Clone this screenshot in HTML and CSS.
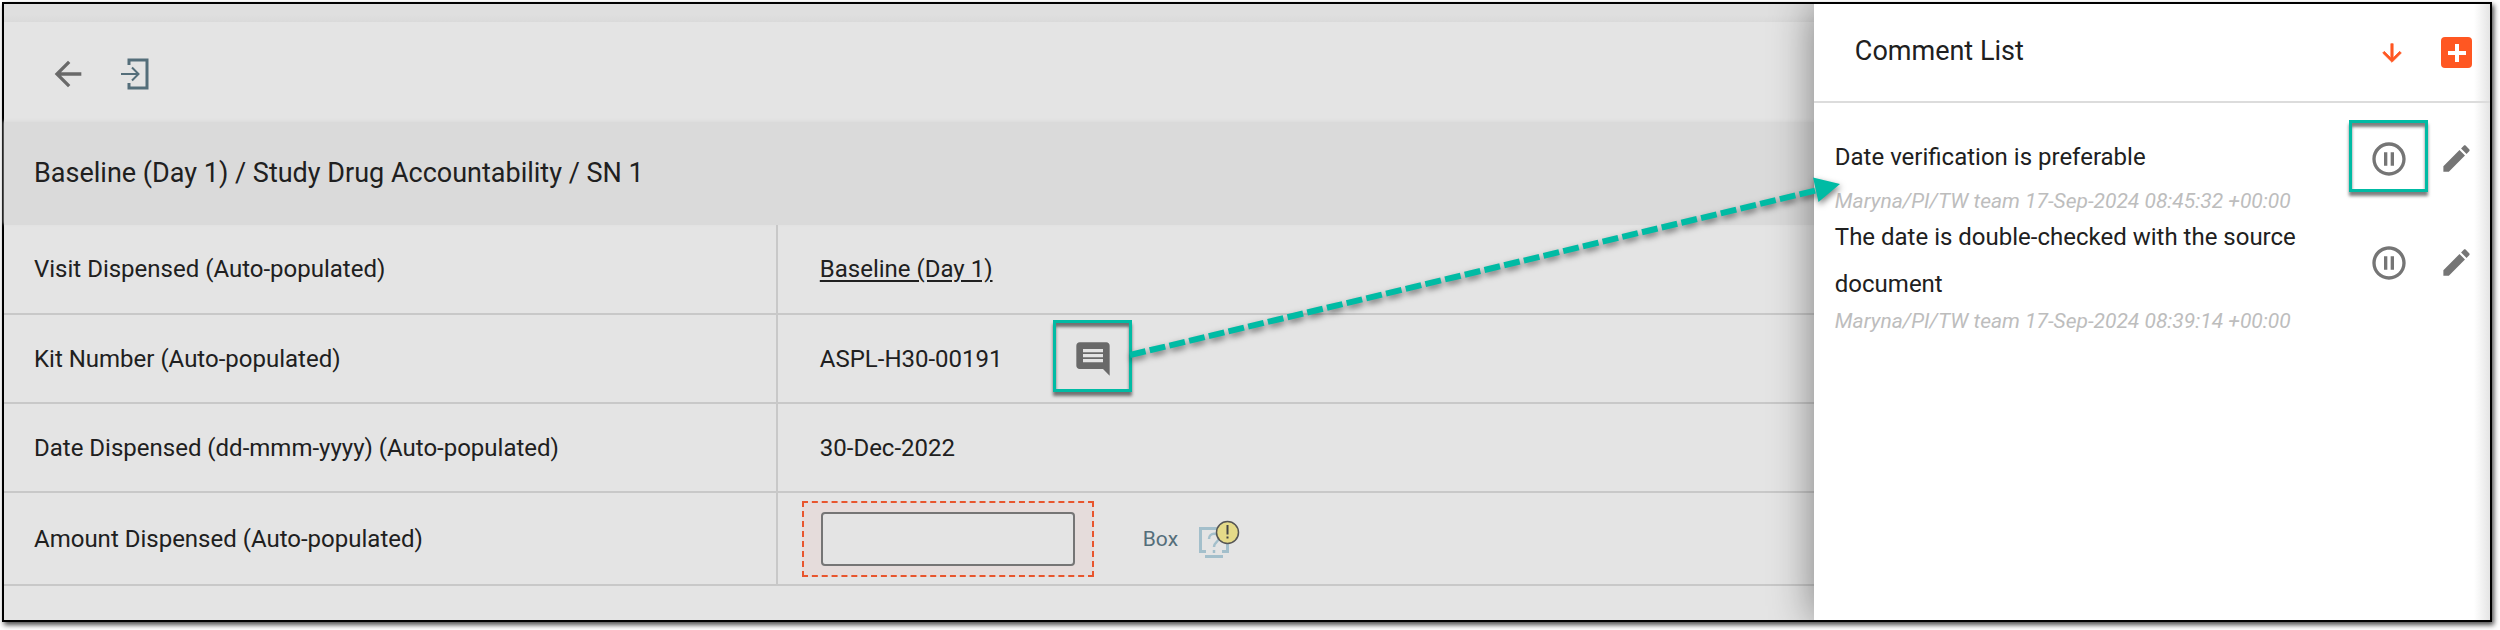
FILE: index.html
```
<!DOCTYPE html>
<html lang="en">
<head>
    <meta charset="UTF-8">
    <meta name="viewport" content="width=device-width, initial-scale=1.0">
    <title>Study Drug Accountability</title>
    <link rel="stylesheet" href="styles.css">
</head>
<body>
    <div class="window">
        <main class="form">
            <div class="strip"></div>
            <div class="toolbar">
                <button class="icon-button" aria-label="Back">
                    <svg width="40" height="40" viewBox="0 0 24 24" fill="currentColor">
                        <path d="M20 11H7.83l5.59-5.59L12 4l-8 8 8 8 1.41-1.41L7.83 13H20v-2z"/>
                    </svg>
                </button>
                <button class="icon-button exit" aria-label="Exit">
                    <svg width="28" height="32" viewBox="0 0 28 32" fill="none" stroke="currentColor">
                        <path d="M8 7V2h18v28H8v-5" stroke-width="3"/>
                        <path d="M0 16h18M11 9.500l6.500 6.500-6.500 6.500" stroke-width="2"/>
                    </svg>
                </button>
            </div>
            <h1 class="form-title">Baseline (Day 1) / Study Drug Accountability / SN 1</h1>
            <table class="fields">
                <tr>
                    <th scope="row">Visit Dispensed (Auto-populated)</th>
                    <td><a href="#">Baseline (Day 1)</a></td>
                </tr>
                <tr>
                    <th scope="row">Kit Number (Auto-populated)</th>
                    <td>
                        <div class="value">
                            <span>ASPL-H30-00191</span>
                            <button class="icon-button comment highlight" aria-label="Comments">
                                <svg width="40" height="40" viewBox="0 0 24 24" fill="currentColor">
                                    <path d="M21.990 4c0-1.100-.89-2-1.990-2H4c-1.100 0-2 .9-2 2v12c0 1.100.9 2 2 2h14l4 4-.01-18zM18 14H6v-2h12v2zm0-3H6V9h12v2zm0-3H6V6h12v2z"/>
                                </svg>
                            </button>
                        </div>
                    </td>
                </tr>
                <tr>
                    <th scope="row">Date Dispensed (dd-mmm-yyyy) (Auto-populated)</th>
                    <td>30-Dec-2022</td>
                </tr>
                <tr>
                    <th scope="row"><label for="amount">Amount Dispensed (Auto-populated)</label></th>
                    <td class="amount-cell">
                        <div class="value">
                            <div class="required">
                                <input type="text" id="amount">
                            </div>
                            <span class="unit">Box</span>
                            <button class="icon-button query" aria-label="Query">
                                <svg width="42" height="42" viewBox="0 0 42 42" fill="none">
                                    <g stroke="#a3bfcb" stroke-width="3">
                                        <path d="M8 33.500H2.500v-23h27v23H24M7 38.500h18"/>
                                        <path d="M11 21c0-7 10-6.500 10-1 0 4-5 4-5 9M16 32v3" stroke-width="2.500"/>
                                    </g>
                                    <circle cx="29.500" cy="14.500" r="11" fill="#e5da88" stroke="#555" stroke-width="1.500"/>
                                    <path d="M29.500 7v9.500M29.500 18.500v2" stroke="#444" stroke-width="2"/>
                                </svg>
                            </button>
                        </div>
                    </td>
                </tr>
            </table>
        </main>

        <aside class="drawer">
            <header class="drawer-header">
                <h2>Comment List</h2>
                <button class="icon-button sort" aria-label="Sort">
                    <svg width="28" height="28" viewBox="0 0 24 24" fill="currentColor" stroke="currentColor" stroke-width="0.600">
                        <path d="M20 12l-1.410-1.410L13 16.170V4h-2v12.170l-5.580-5.590L4 12l8 8 8-8z"/>
                    </svg>
                </button>
                <button class="icon-button add" aria-label="Add comment">
                    <svg width="18" height="18" viewBox="0 0 18 18" stroke="#fff" stroke-width="4">
                        <path d="M9 0v18M0 9h18"/>
                    </svg>
                </button>
            </header>
            <ul class="comments">
                <li>
                    <div class="comment-row">
                        <p>Date verification is preferable</p>
                        <div class="actions">
                            <button class="icon-button highlight" aria-label="Pause">
                                <svg width="40" height="40" viewBox="0 0 24 24" fill="currentColor">
                                    <path d="M9 16h2V8H9v8zm3-14C6.480 2 2 6.480 2 12s4.480 10 10 10 10-4.480 10-10S17.520 2 12 2zm0 18c-4.410 0-8-3.590-8-8s3.590-8 8-8 8 3.590 8 8-3.590 8-8 8zm1-4h2V8h-2v8z"/>
                                </svg>
                            </button>
                            <button class="icon-button" aria-label="Edit">
                                <svg width="35" height="35" viewBox="0 0 24 24" fill="currentColor">
                                    <path d="M3 17.250V21h3.750L17.810 9.940l-3.750-3.750L3 17.250zM20.710 7.040c.39-.39.39-1.020 0-1.410l-2.340-2.340c-.39-.39-1.020-.39-1.410 0l-1.830 1.830 3.750 3.750 1.830-1.830z"/>
                                </svg>
                            </button>
                        </div>
                    </div>
                    <em>Maryna/PI/TW team 17-Sep-2024 08:45:32 +00:00</em>
                </li>
                <li>
                    <div class="comment-row">
                        <p>The date is double-checked with the source document</p>
                        <div class="actions">
                            <button class="icon-button" aria-label="Pause">
                                <svg width="40" height="40" viewBox="0 0 24 24" fill="currentColor">
                                    <path d="M9 16h2V8H9v8zm3-14C6.480 2 2 6.480 2 12s4.480 10 10 10 10-4.480 10-10S17.520 2 12 2zm0 18c-4.410 0-8-3.590-8-8s3.590-8 8-8 8 3.590 8 8-3.590 8-8 8zm1-4h2V8h-2v8z"/>
                                </svg>
                            </button>
                            <button class="icon-button" aria-label="Edit">
                                <svg width="35" height="35" viewBox="0 0 24 24" fill="currentColor">
                                    <path d="M3 17.250V21h3.750L17.810 9.940l-3.750-3.750L3 17.250zM20.710 7.040c.39-.39.39-1.020 0-1.410l-2.340-2.340c-.39-.39-1.020-.39-1.410 0l-1.830 1.830 3.750 3.750 1.830-1.830z"/>
                                </svg>
                            </button>
                        </div>
                    </div>
                    <em>Maryna/PI/TW team 17-Sep-2024 08:39:14 +00:00</em>
                </li>
            </ul>
        </aside>

        <!-- Arrow from the comment icon to the list -->
        <svg class="pointer" width="720" height="190" viewBox="0 0 720 190">
            <path d="M4 179L692 14" stroke="#00bba4" stroke-width="6" stroke-dasharray="16 4.250"/>
            <path d="M687 1.500L714 8l-21.500 18z" fill="#00bba4"/>
        </svg>
    </div>
</body>
</html>
```
FILE: styles.css
```
:root {
    --fg: #202020;
    --bg: #e4e4e4;
    --bg2: #dadada;
    --line: #c8c8c8;
    --icon: #696969;
    --slate: #546e7a;
    --accent: #00bba4;
    --orange: #ff5722;
}

* {
    margin: 0;
    padding: 0;
    box-sizing: border-box;
    font-family: Roboto, sans-serif;
}

body {
    padding: 2px 8px 8px 2px;
    background-color: #fff;
    color: var(--fg);
    font-size: 24px;
}

.window {
    position: relative;
    display: flex;
    min-height: calc(100vh - 10px);
    border: 2px solid #000;
    box-shadow: 2px 3px 5px rgba(0, 0, 0, 0.7);
}

.form {
    flex: 1;
    background-color: var(--bg);
}

.strip {
    height: 18px;
    background: linear-gradient(#dfdfdf 60%, #dadada);
}

.toolbar {
    display: flex;
    align-items: center;
    gap: 33px;
    height: 100px;
    padding: 4px 44px 0;
}

.icon-button {
    position: relative;
    display: flex;
    align-items: center;
    justify-content: center;
    border: none;
    background: none;
    color: var(--icon);
    cursor: pointer;
}

.exit {
    color: var(--slate);
}

.form-title {
    padding: 0 30px;
    background-color: var(--bg2);
    box-shadow: 0 -1px 3px #dadada;
    font-size: 27px;
    font-weight: 400;
    line-height: 103px;
}

.fields {
    width: 100%;
    border-collapse: collapse;
    table-layout: fixed;
}

.fields tr {
    height: 89px;
    border-bottom: 2px solid var(--line);
}

.fields th {
    width: 42.7%;
    padding-left: 30px;
    border-right: 2px solid var(--line);
    font-weight: 400;
    text-align: left;
}

.fields td {
    padding-left: 42px;
}

.fields a {
    color: inherit;
    text-underline-offset: 3px;
}

.value {
    display: flex;
    align-items: center;
}

.comment {
    margin-left: 70px;
}

.highlight::before {
    content: "";
    position: absolute;
    inset: -19px -19px -13px -20px;
    border: 3px solid var(--accent);
    box-shadow: 0 4px 3px rgba(0, 0, 0, 0.5), inset 0 4px 3px rgba(0, 0, 0, 0.5);
}

.fields .amount-cell {
    height: 93px;
    padding-left: 24px;
}

.required {
    padding: 9px 17px;
    border: 2px dashed #e8552d;
    background-color: #e5dcdb;
}

.required input {
    display: block;
    width: 254px;
    height: 54px;
    padding: 0 12px;
    border: 2px solid #757575;
    border-radius: 4px;
    background-color: var(--bg);
    font-size: 24px;
}

.unit {
    margin: 0 20px 0 49px;
    color: var(--slate);
    font-size: 21px;
}

.drawer {
    width: 27.2%;
    background: linear-gradient(to left, #e4e4e4, #fff 16px);
    box-shadow: 0 0 40px rgba(0, 0, 0, 0.45);
    clip-path: inset(0 0 0 -60px);
}

.drawer-header {
    display: flex;
    align-items: center;
    height: 99px;
    padding: 0 18px 0 41px;
    border-bottom: 2px solid #dcdcdc;
}

.drawer-header h2 {
    flex: 1;
    padding-bottom: 4px;
    font-size: 27px;
    font-weight: 400;
}

.sort {
    margin-right: 35px;
    color: var(--orange);
}

.add {
    width: 31px;
    height: 31px;
    border-radius: 4px;
    background-color: var(--orange);
}

.comments {
    padding: 23px 16px 0 21px;
    list-style: none;
}

.comment-row {
    display: flex;
    align-items: center;
    justify-content: space-between;
    min-height: 62px;
}

.comment-row p {
    max-width: 480px;
    line-height: 47px;
}

.actions {
    display: flex;
    align-items: center;
    gap: 30px;
    padding-top: 3px;
}

.actions .icon-button {
    color: #757575;
}

.comments em {
    display: block;
    color: #bdbdbd;
    font-size: 21px;
    line-height: 26px;
}

/* Drawn over both the form and the drawer */
.pointer {
    position: absolute;
    top: 172px;
    left: 1122px;
    filter: drop-shadow(1px 3px 3px rgba(0, 0, 0, 0.5));
    pointer-events: none;
}
```
